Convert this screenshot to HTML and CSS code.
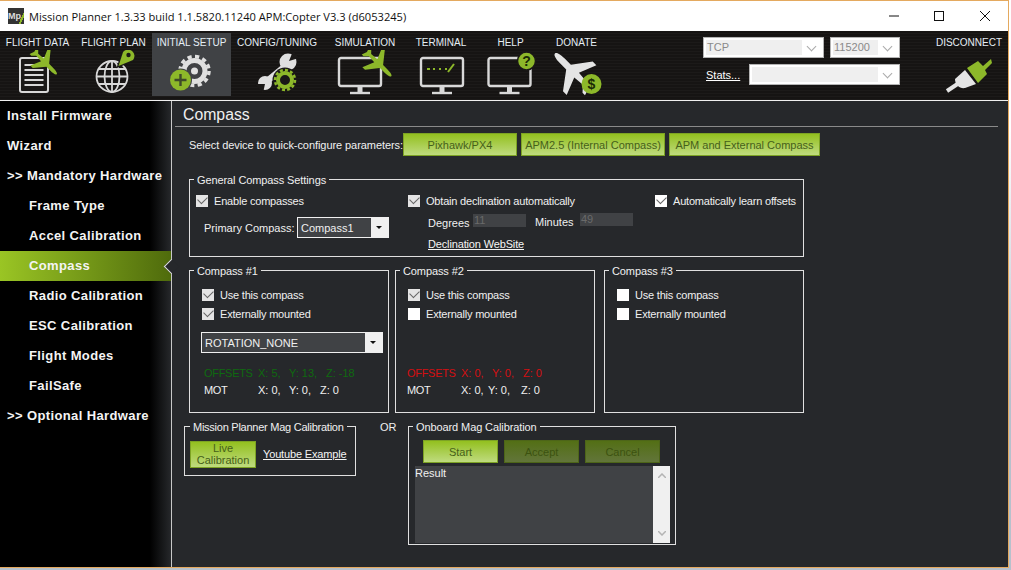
FILE: index.html
```html
<!DOCTYPE html>
<html lang="en">
<head>
    <meta charset="UTF-8">
    <title>Mission Planner</title>
    <link rel="stylesheet" href="styles.css">
</head>
<body>
    <svg class="defs" width="0" height="0">
        <defs>
            <path id="plane" d="M0-15C1.6-15 2.2-12 2.2-9V-4L14 3.5V6.5L2.2 2.5 1.6 9 5.5 12V14L0 12.5-5.5 14V12L-1.6 9-2.2 2.5-14 6.5V3.5L-2.2-4V-9C-2.2-12-1.6-15 0-15Z"/>
            <g id="monitor" fill="none" stroke="#d8d8d8">
                <rect x="1" y="0" width="42" height="28" rx="2" stroke-width="2.4"/>
                <path d="M22 29V34" stroke-width="5"/>
                <path d="M12 35H32" stroke-width="2.4"/>
            </g>
        </defs>
    </svg>

    <div id="window">
        <div class="titlebar">
            <div class="app-logo">Mp</div>
            <div class="app-title">Mission Planner 1.3.33 build 1.1.5820.11240 APM:Copter V3.3 (d6053245)</div>
            <div class="win-btns">
                <svg width="46" height="30" viewBox="0 0 46 30"><path d="M18 15H28" stroke="#111" fill="none"/></svg>
                <svg width="46" height="30" viewBox="0 0 46 30"><rect x="18.5" y="10.5" width="9" height="9" stroke="#111" fill="none"/></svg>
                <svg width="46" height="30" viewBox="0 0 46 30"><path d="M18 10L28 20M28 10L18 20" stroke="#111" fill="none"/></svg>
            </div>
        </div>

        <div class="menubar">
            <div class="nav">
                <div class="nav-item w1">
                    <span>FLIGHT DATA</span>
                    <svg width="60" height="46" viewBox="7.5 50 60 46">
                        <rect x="19.5" y="58" width="28" height="34" rx="2" fill="#1a1817" stroke="#d8d8d8" stroke-width="2"/>
                        <path d="M24 65H36M24 70H43M24 75H43M24 80H43M24 85H43" stroke="#d8d8d8" stroke-width="2" fill="none"/>
                        <use href="#plane" transform="translate(44 62) rotate(135) scale(.9 1.15)" fill="#8db82a"/>
                    </svg>
                </div>
                <div class="nav-item w2">
                    <span>FLIGHT PLAN</span>
                    <svg width="60" height="46" viewBox="83.5 50 60 46">
                        <g fill="none" stroke="#d8d8d8" stroke-width="1.8">
                            <circle cx="111.5" cy="76.5" r="15.5"/>
                            <ellipse cx="111.5" cy="76.5" rx="7.5" ry="15.5"/>
                            <path d="M111.5 61V92M98 69H125M96 76.5H127M98 84H125"/>
                        </g>
                        <path d="M118 66L122.6 52A6 6 0 1 1 132.5 60Z" fill="#1a1817" stroke="#1a1817" stroke-width="2.5"/>
                        <path d="M118 66L122.6 52A6 6 0 1 1 132.5 60Z" fill="#8db82a"/>
                        <circle cx="128" cy="55" r="2.2" fill="#1a1817"/>
                    </svg>
                </div>
                <div class="nav-item w3 active">
                    <span>INITIAL SETUP</span>
                    <svg width="60" height="46" viewBox="161.5 50 60 46">
                        <circle cx="194" cy="71" r="10.5" fill="none" stroke="#e0e0e0" stroke-width="5"/>
                        <circle cx="194" cy="71" r="14.5" fill="none" stroke="#e0e0e0" stroke-width="3.5" stroke-dasharray="4.2 3.4"/>
                        <circle cx="194" cy="71" r="3.5" fill="#e0e0e0"/>
                        <circle cx="180" cy="80" r="11.5" fill="#404245"/>
                        <circle cx="180" cy="80" r="10.5" fill="#8db82a"/>
                        <path d="M180 74V86M174 80H186" stroke="#3f4a2a" stroke-width="2.4" fill="none"/>
                    </svg>
                </div>
                <div class="nav-item w4">
                    <span>CONFIG/TUNING</span>
                    <svg width="60" height="46" viewBox="247 50 60 46">
                        <path d="M266 82L288 64" stroke="#e0e0e0" stroke-width="6.5" fill="none"/>
                        <circle cx="288" cy="62" r="8.5" fill="#e0e0e0"/>
                        <circle cx="265" cy="83" r="7" fill="#e0e0e0"/>
                        <path d="M289 61L293 51L299 58Z" fill="#1a1817"/>
                        <path d="M265 84L255 84L263 93Z" fill="#1a1817"/>
                        <circle cx="285" cy="80" r="12.5" fill="#1a1817"/>
                        <circle cx="285" cy="80" r="7" fill="none" stroke="#8db82a" stroke-width="4"/>
                        <circle cx="285" cy="80" r="10" fill="none" stroke="#8db82a" stroke-width="2.5" stroke-dasharray="3 2.2"/>
                    </svg>
                </div>
                <div class="nav-item w5">
                    <span>SIMULATION</span>
                    <svg width="60" height="46" viewBox="335 50 60 46">
                        <use href="#monitor" x="338" y="58"/>
                        <use href="#plane" transform="translate(378 63) rotate(135) scale(1 1.25)" fill="#8db82a"/>
                    </svg>
                </div>
                <div class="nav-item w6">
                    <span>TERMINAL</span>
                    <svg width="60" height="46" viewBox="411 50 60 46">
                        <use href="#monitor" x="420" y="58"/>
                        <path d="M427 69H430M433 69H435M439 69H441M445 69H447" stroke="#8db82a" stroke-width="2" fill="none"/>
                        <path d="M448 72L454 64" stroke="#8db82a" stroke-width="2" fill="none"/>
                    </svg>
                </div>
                <div class="nav-item w7">
                    <span>HELP</span>
                    <svg width="60" height="46" viewBox="480.5 50 60 46">
                        <use href="#monitor" x="487" y="58"/>
                        <circle cx="526" cy="61" r="9" fill="#8db82a" stroke="#1a1817" stroke-width="1.5"/>
                        <text x="526" y="66" class="help-mark">?</text>
                    </svg>
                </div>
                <div class="nav-item w8">
                    <span>DONATE</span>
                    <svg width="60" height="46" viewBox="546.5 50 60 46">
                        <use href="#plane" transform="translate(573 72) rotate(-45) scale(1.5 1.75)" fill="#e4e4e4"/>
                        <circle cx="591" cy="84" r="10" fill="#8db82a"/>
                        <text x="591" y="89" class="help-mark">$</text>
                    </svg>
                </div>
            </div>

            <div class="connect">
                <div class="connect-row">
                    <div class="combo wide"><span>TCP</span><i></i></div>
                    <div class="combo narrow"><span>115200</span><i></i></div>
                </div>
                <div class="connect-row second">
                    <a class="stats">Stats...</a>
                    <div class="combo blank"><span></span><i></i></div>
                </div>
            </div>

            <div class="nav-item disconnect">
                <span>DISCONNECT</span>
                <svg width="60" height="46" viewBox="940 50 60 46">
                    <path d="M948 91L960 83" stroke="#e4e4e4" stroke-width="4" fill="none"/>
                    <path d="M956 79L966 70L977 84L966 88C961 89 956 85 956 79Z" fill="#e4e4e4"/>
                    <path d="M968 68L979 61L984 66L992 59L993 63L986 70L988 74L979 83Z" fill="#8db82a"/>
                </svg>
            </div>
        </div>

        <div class="main">
            <div class="sidebar">
                <div class="side-item">Install Firmware</div>
                <div class="side-item">Wizard</div>
                <div class="side-item">&gt;&gt; Mandatory Hardware</div>
                <div class="side-item sub">Frame Type</div>
                <div class="side-item sub">Accel Calibration</div>
                <div class="side-item sub current">Compass</div>
                <div class="side-item sub">Radio Calibration</div>
                <div class="side-item sub">ESC Calibration</div>
                <div class="side-item sub">Flight Modes</div>
                <div class="side-item sub">FailSafe</div>
                <div class="side-item">&gt;&gt; Optional Hardware</div>
            </div>

            <div class="content">
                <h1 class="page-title">Compass</h1>

                <div class="quick-row">
                    <span>Select device to quick-configure parameters:</span>
                    <button class="btn pix">Pixhawk/PX4</button>
                    <button class="btn apm25">APM2.5 (Internal Compass)</button>
                    <button class="btn apmext">APM and External Compass</button>
                </div>

                <fieldset class="group general">
                    <legend>General Compass Settings</legend>
                    <div class="gen-col one">
                        <label class="chk"><i class="box on"></i>Enable compasses</label>
                        <div class="primary">
                            <span>Primary Compass:</span>
                            <div class="drop small"><span>Compass1</span><b></b></div>
                        </div>
                    </div>
                    <div class="gen-col two">
                        <label class="chk"><i class="box on"></i>Obtain declination automatically</label>
                        <div class="decl">
                            <span class="decl-label">Degrees</span><span class="num first">11</span>
                            <span class="decl-label min-label">Minutes</span><span class="num">49</span>
                        </div>
                        <a class="link decl-link">Declination WebSite</a>
                    </div>
                    <div class="gen-col three">
                        <label class="chk"><i class="box on white"></i>Automatically learn offsets</label>
                    </div>
                </fieldset>

                <div class="compass-row">
                    <fieldset class="group compass c1">
                        <legend>Compass #1</legend>
                        <label class="chk"><i class="box on"></i>Use this compass</label>
                        <label class="chk"><i class="box on"></i>Externally mounted</label>
                        <div class="drop rotation"><span>ROTATION_NONE</span><b></b></div>
                        <div class="readout green"><span>OFFSETS</span><span>X: 5,</span><span>Y: 13,</span><span>Z: -18</span></div>
                        <div class="readout"><span>MOT</span><span>X: 0,</span><span>Y: 0,</span><span>Z: 0</span></div>
                    </fieldset>
                    <fieldset class="group compass c2">
                        <legend>Compass #2</legend>
                        <label class="chk"><i class="box on"></i>Use this compass</label>
                        <label class="chk"><i class="box white"></i>Externally mounted</label>
                        <div class="drop-gap"></div>
                        <div class="readout red"><span>OFFSETS</span><span>X: 0,</span><span>Y: 0,</span><span>Z: 0</span></div>
                        <div class="readout tight"><span>MOT</span><span>X: 0,</span><span>Y: 0,</span><span>Z: 0</span></div>
                    </fieldset>
                    <fieldset class="group compass c3">
                        <legend>Compass #3</legend>
                        <label class="chk"><i class="box white"></i>Use this compass</label>
                        <label class="chk"><i class="box white"></i>Externally mounted</label>
                    </fieldset>
                </div>

                <div class="cal-row">
                    <fieldset class="group mp-cal">
                        <legend>Mission Planner Mag Calibration</legend>
                        <button class="btn live">Live<br>Calibration</button>
                        <a class="link">Youtube Example</a>
                    </fieldset>
                    <div class="or">OR</div>
                    <fieldset class="group onboard">
                        <legend>Onboard Mag Calibration</legend>
                        <div class="cal-btns">
                            <button class="btn">Start</button>
                            <button class="btn off">Accept</button>
                            <button class="btn off">Cancel</button>
                        </div>
                        <div class="result">
                            <div class="result-text">Result</div>
                            <div class="scroll">
                                <svg width="8" height="5" viewBox="0 0 8 5"><path d="M0 5L4 1L8 5" stroke="#b4b4b4" stroke-width="1.5" fill="none"/></svg>
                                <svg width="8" height="5" viewBox="0 0 8 5"><path d="M0 0L4 4L8 0" stroke="#b4b4b4" stroke-width="1.5" fill="none"/></svg>
                            </div>
                        </div>
                    </fieldset>
                </div>
            </div>
        </div>
    </div>
    <div class="window-bottom"></div>
</body>
</html>
```

FILE: styles.css
```css
* {
    box-sizing: border-box;
}
body {
    margin: 0;
    width: 1011px;
    height: 570px;
    overflow: hidden;
    background: linear-gradient(180deg, #fff 0, #fff 130px, #b6c1cc 400px);
    font-family: "Liberation Sans", Arial, sans-serif;
    font-size: 11px;
    color: #f0f0f0;
}
.defs {
    display: block;
    height: 0;
}
#window {
    width: 1009px;
    height: 568px;
    border-top: 1px solid #e4a95f;
    border-right: 1px solid #e4a95f;
    border-bottom: 1px solid #e4a95f;
    display: flex;
    flex-direction: column;
    overflow: hidden;
}
.window-bottom {
    height: 2px;
    background: #b6c1cc;
    width: 1011px;
}

/* title bar */
.titlebar {
    height: 30px;
    flex: none;
    background: #fff;
    display: flex;
    align-items: center;
    color: #111;
}
.app-logo {
    width: 16px;
    height: 16px;
    margin-left: 8px;
    background: linear-gradient(115deg, #333 76%, #8db82a 76%, #8db82a 86%, #333 86%);
    color: #ddd;
    font-size: 9px;
    font-weight: bold;
    line-height: 16px;
    text-align: left;
    overflow: hidden;
}
.app-title {
    margin-left: 5px;
    font-family: "Open Sans", sans-serif;
    font-size: 11.1px;
    white-space: nowrap;
}
.win-btns {
    margin-left: auto;
    display: flex;
}
.win-btns svg {
    display: block;
    margin-left: -1px;
}
.win-btns svg:last-child {
    margin-left: 0;
}

/* top menu */
.menubar {
    height: 69px;
    flex: none;
    display: flex;
    background-color: #1a1817;
    background-image: repeating-linear-gradient(0deg, #1c1a19 0 1px, #161413 1px 3px);
}
.nav {
    display: flex;
    width: 607px;
    flex: none;
}
.nav-item {
    display: flex;
    flex-direction: column;
    align-items: center;
    color: #e6eef5;
    font-size: 10px;
    padding-top: 5px;
    height: 65px;
    white-space: nowrap;
}
.nav-item span {
    line-height: 14px;
    height: 14px;
}
.nav-item svg {
    display: block;
    flex: none;
}
.nav-item.active {
    background: #404245;
    margin-top: 2px;
    padding-top: 3px;
    height: 63px;
}
.w1 { width: 75px; }
.w2 { width: 77px; }
.w3 { width: 79px; }
.w4 { width: 92px; }
.w5 { width: 84px; }
.w6 { width: 68px; }
.w7 { width: 71px; }
.w8 { width: 61px; }
.help-mark {
    font-family: "Liberation Sans", sans-serif;
    font-size: 14px;
    font-weight: bold;
    fill: #1a2a05;
    text-anchor: middle;
}
.connect {
    margin-left: 96px;
    width: 197px;
    padding-top: 6px;
}
.connect-row {
    display: flex;
    gap: 6px;
}
.connect-row.second {
    margin-top: 6px;
    align-items: center;
    gap: 9px;
}
.combo {
    height: 21px;
    background: #fff;
    border: 1px solid #b4b4b4;
    padding: 2px;
    display: flex;
    color: #8a8a8a;
    font-size: 11px;
}
.combo span {
    background: #efefef;
    flex: 1;
    line-height: 15px;
    padding-left: 1px;
}
.combo i {
    width: 19px;
    position: relative;
}
.combo i::after {
    content: "";
    position: absolute;
    left: 6px;
    top: 3px;
    width: 6px;
    height: 6px;
    border-right: 1px solid #aaa;
    border-bottom: 1px solid #aaa;
    transform: rotate(45deg);
}
.combo.wide { width: 121px; }
.combo.narrow { width: 70px; }
.combo.blank { width: 151px; }
.stats {
    margin-left: 3px;
    color: #fff;
    text-decoration: underline;
    font-size: 11px;
    line-height: 16px;
    width: 34px;
    white-space: nowrap;
}
.disconnect {
    margin-left: 30px;
    width: 80px;
}

/* left menu */
.main {
    flex: 1;
    display: flex;
    border-top: 1px solid #f0f0f0;
    min-height: 0;
}
.sidebar {
    width: 172px;
    flex: none;
    background: linear-gradient(90deg, #000 0, #000 150px, #26282b 171px);
    border-right: 1px solid #c8c8c8;
}
.side-item {
    height: 30px;
    line-height: 29px;
    padding-left: 7px;
    font-size: 13px;
    font-weight: bold;
    letter-spacing: .38px;
    color: #f4f4f4;
    white-space: nowrap;
}
.side-item.sub {
    padding-left: 29px;
}
.side-item.current {
    position: relative;
    background: linear-gradient(90deg, #9ac524 0, #4f6b0c 100%);
}
.side-item.current::after {
    content: "";
    position: absolute;
    right: -6px;
    top: 10px;
    width: 10px;
    height: 10px;
    background: #26282b;
    border-left: 1px solid #e0e0e0;
    border-bottom: 1px solid #e0e0e0;
    transform: rotate(45deg);
}

/* main panel */
.content {
    flex: 1;
    background: #26282b;
    padding-left: 3px;
}
.page-title {
    margin: 0 10px 0 0;
    font-size: 15.8px;
    font-weight: normal;
    line-height: 28px;
    height: 26px;
    padding-left: 8px;
    border-bottom: 1px solid #8a8a8a;
    color: #f0f0f0;
}
.quick-row {
    display: flex;
    align-items: center;
    margin-top: 6px;
    padding-left: 14px;
    white-space: nowrap;
}
.quick-row span {
    width: 214px;
    letter-spacing: -.07px;
}
.btn {
    height: 23px;
    padding: 0;
    font-family: inherit;
    font-size: 11px;
    color: #46601a;
    background: linear-gradient(180deg, #93c01f 0, #bfdb7e 100%);
    border: 1px solid #7da324;
    white-space: nowrap;
}
.btn.off {
    background: linear-gradient(180deg, #536f15 0, #62753a 100%);
    border-color: #4d6518;
    color: #3c5210;
}
.pix { width: 114px; }
.apm25 { width: 144px; margin-left: 4px; }
.apmext { width: 151px; margin-left: 4px; }

.group {
    margin: 0;
    padding: 0;
    border: 1px solid #e0e0e0;
    min-width: 0;
}
.group legend {
    padding: 0 3px;
    margin-left: 4px;
    height: 14px;
    line-height: 16px;
    font-size: 11px;
    letter-spacing: -.1px;
    white-space: nowrap;
}
.general {
    margin: 16px 0 0 14px;
    width: 615px;
    height: 85px;
    display: flex;
    padding-top: 8px;
}
.chk {
    display: flex;
    align-items: center;
    height: 14px;
    white-space: nowrap;
    letter-spacing: -.2px;
}
.box {
    width: 12px;
    height: 12px;
    background: #e4e4e4;
    margin-right: 6px;
    flex: none;
    position: relative;
}
.box.white {
    background: #fff;
}
.box.on::after {
    content: "";
    position: absolute;
    left: 2px;
    top: 1px;
    width: 8px;
    height: 5px;
    border-left: 1.5px solid #666;
    border-bottom: 1.5px solid #666;
    transform: rotate(-45deg);
}
.gen-col {
    display: flex;
    flex-direction: column;
}
.gen-col.one {
    width: 218px;
    padding-left: 6px;
}
.gen-col.two {
    width: 247px;
}
.primary {
    display: flex;
    align-items: center;
    margin-top: 9px;
    margin-left: 8px;
    white-space: nowrap;
}
.primary > span {
    width: 93px;
    flex: none;
}
.drop {
    height: 21px;
    background: #404245;
    border: 1px solid #f0f0f0;
    display: flex;
    align-items: center;
    padding-left: 3px;
    justify-content: space-between;
}
.drop b {
    width: 17px;
    height: 19px;
    background: #f0f0f0;
    position: relative;
}
.drop b::after {
    content: "";
    position: absolute;
    left: 5px;
    top: 8px;
    border-left: 3px solid transparent;
    border-right: 3px solid transparent;
    border-top: 3px solid #111;
}
.drop.small { width: 92px; flex: none; }
.decl {
    display: flex;
    align-items: flex-start;
    margin-top: 5px;
    padding-left: 20px;
}
.decl-label {
    width: 45px;
    flex: none;
    line-height: 14px;
    margin-top: 3px;
}
.num {
    width: 53px;
    height: 13px;
    background: #404245;
    color: #6a6a6a;
    line-height: 13px;
    padding-left: 1px;
}
.num.first {
    margin-top: 1px;
}
.min-label {
    margin-left: 9px;
    margin-top: 2px;
}
.link {
    color: #f4f4f4;
    text-decoration: underline;
    white-space: nowrap;
    letter-spacing: -.15px;
}
.decl-link {
    margin-top: 7px;
    margin-left: 20px;
    line-height: 14px;
}
.compass-row {
    display: flex;
    margin: 6px 0 0 14px;
}
.compass {
    width: 200px;
    height: 150px;
    padding: 11px 0 0 12px;
}
.compass legend {
    margin-left: -8px;
}
.c1 { margin-right: 6px; }
.c2 { margin-right: 9px; }
.compass .chk + .chk {
    margin-top: 5px;
}
.drop.rotation {
    width: 182px;
    margin: 11px 0 0 -1px;
}
.drop-gap {
    height: 21px;
    margin-top: 11px;
}
.readout {
    display: flex;
    height: 17px;
    line-height: 17px;
    margin-top: 12px;
    padding-left: 2px;
    white-space: nowrap;
}
.c2 .readout {
    margin-left: -3px;
}
.readout + .readout {
    margin-top: 0;
}
.readout span {
    width: 31px;
}
.readout span:first-child {
    width: 54px;
    letter-spacing: -.3px;
}
.readout.green span:nth-child(3) {
    width: 37px;
}
.readout.tight span:nth-child(2) {
    width: 27px;
}
.readout.tight span:nth-child(3) {
    width: 33px;
}
.readout.green {
    color: #0f6a0f;
}
.readout.red {
    color: #d40f12;
}
.cal-row {
    display: flex;
    align-items: flex-start;
    margin: 6px 0 0 9px;
}
.mp-cal {
    width: 172px;
    height: 57px;
    display: flex;
    align-items: center;
    gap: 7px;
    padding: 0 0 0 5px;
}
.mp-cal legend {
    margin-left: 0;
    letter-spacing: -.25px;
}
.live {
    width: 66px;
    height: 27px;
    line-height: 12px;
    flex: none;
}
.or {
    margin: 1px 0 0 24px;
    width: 28px;
    line-height: 14px;
}
.onboard {
    width: 268px;
    height: 126px;
    padding: 7px 0 0 6px;
}
.onboard legend {
    margin-left: -2px;
}
.cal-btns {
    display: flex;
    gap: 6px;
    margin-left: 8px;
}
.cal-btns .btn {
    width: 75px;
}
.result {
    display: flex;
    width: 255px;
    height: 77px;
    margin-top: 3px;
    background: #404245;
}
.result-text {
    flex: 1;
    line-height: 14px;
}
.scroll {
    width: 17px;
    background: #f0f0f0;
    display: flex;
    flex-direction: column;
    justify-content: space-between;
    align-items: center;
    padding: 7px 0;
}
.scroll svg {
    display: block;
}
```
